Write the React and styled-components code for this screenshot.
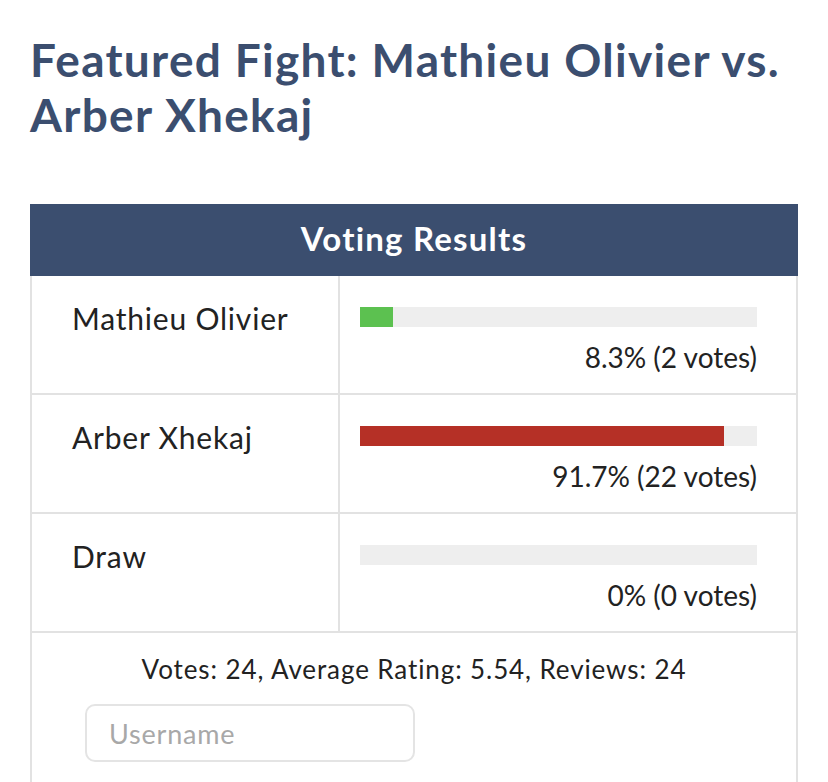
import React from "react";
import styled, { createGlobalStyle } from "styled-components";

const GlobalStyle = createGlobalStyle`
  html, body {
    margin: 0;
    padding: 0;
    background: #fff;
  }
  body {
    font-family: Lato, "Liberation Sans", sans-serif;
    color: #222;
  }
`;

const Page = styled.div`
  padding: 0 30px;
  width: 768px;
`;

const Title = styled.h1`
  margin: 32px 0 62px 0;
  font-size: 46px;
  line-height: 55px;
  font-weight: 700;
  color: #3b4e6f;
  letter-spacing: 1.3px;
`;

const Table = styled.div`
  border-left: 2px solid #e2e2e2;
  border-right: 2px solid #e2e2e2;
`;

const Header = styled.div`
  margin: 0 -2px;
  height: 72px;
  box-sizing: border-box;
  padding-bottom: 5px;
  background: #3b4e6f;
  color: #fff;
  font-size: 33px;
  font-weight: 700;
  letter-spacing: 1.2px;
  display: flex;
  align-items: center;
  justify-content: center;
`;

const Row = styled.div`
  display: grid;
  grid-template-columns: 308px 1fr;
  border-bottom: 2px solid #e2e2e2;
`;

const Label = styled.div`
  padding: 24px 20px 0 40px;
  font-size: 30px;
  line-height: 36px;
  letter-spacing: 0.8px;
  border-right: 2px solid #e2e2e2;
`;

const BarCell = styled.div`
  padding: 31px 39px 19px 20px;
  display: flex;
  flex-direction: column;
`;

const Track = styled.div`
  height: 20px;
  background: #eeeeee;
`;

const Fill = styled.div`
  height: 100%;
  background: ${(p) => p.$color};
`;

const Percent = styled.div`
  margin-top: 13px;
  text-align: right;
  font-size: 28px;
  line-height: 34px;
  color: #222;
`;

const Footer = styled.div`
  padding: 21px 0 20px 0;
  display: flex;
  flex-direction: column;
`;

const Summary = styled.div`
  text-align: center;
  font-size: 26px;
  line-height: 30px;
  letter-spacing: 0.9px;
`;

const Input = styled.input`
  margin: 20px 0 0 53px;
  width: 330px;
  height: 58px;
  box-sizing: border-box;
  border: 2px solid #e4e4e4;
  border-radius: 10px;
  padding: 0 22px;
  font-family: Lato, "Liberation Sans", sans-serif;
  font-size: 27px;
  letter-spacing: 0.8px;
  color: #222;
  outline: none;
  &::placeholder {
    color: #a8a8a8;
  }
`;

const results = [
  { name: "Mathieu Olivier", pct: 8.3, votes: 2, color: "#5cc150" },
  { name: "Arber Xhekaj", pct: 91.7, votes: 22, color: "#b53026" },
  { name: "Draw", pct: 0, votes: 0, color: "#5cc150" },
];

export default function App() {
  return (
    <Page>
      <GlobalStyle />
      <Title>Featured Fight: Mathieu Olivier vs. Arber Xhekaj</Title>
      <Table>
        <Header>Voting Results</Header>
        {results.map((r) => (
          <Row key={r.name}>
            <Label>{r.name}</Label>
            <BarCell>
              <Track>
                <Fill $color={r.color} style={{ width: `${r.pct}%` }} />
              </Track>
              <Percent>
                {r.pct}% ({r.votes} votes)
              </Percent>
            </BarCell>
          </Row>
        ))}
        <Footer>
          <Summary>Votes: 24, Average Rating: 5.54, Reviews: 24</Summary>
          <Input placeholder="Username" />
        </Footer>
      </Table>
    </Page>
  );
}
